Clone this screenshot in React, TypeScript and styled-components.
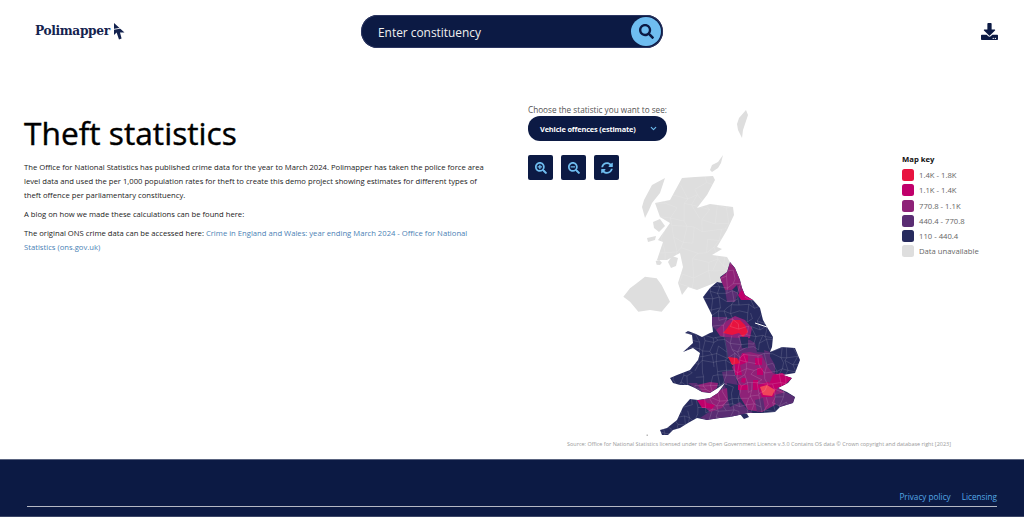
import React, { useMemo } from "react";
import styled, { createGlobalStyle } from "styled-components";
import { FaSearch, FaSearchPlus, FaSearchMinus, FaSyncAlt, FaDownload } from "react-icons/fa";
import { ChevronDown } from "lucide-react";

const NAVY = "#0c1a44";
const SKY = "#6fbdf0";
const FONT = `"Open Sans", "Noto Sans", sans-serif`;

const Global = createGlobalStyle`
  html, body { margin: 0; padding: 0; background: #fff; }
  body { font-family: ${FONT}; height: 528px; overflow: hidden; }
  * { box-sizing: border-box; }
`;
const Page = styled.div`
  display: flex;
  flex-direction: column;
  width: 1024px;
  height: 528px;
`;
const Header = styled.header`
  display: flex;
  align-items: flex-start;
  height: 62px;
  padding: 15px 26px 0 35px;
`;
const Logo = styled.div`
  display: flex;
  align-items: center;
  width: 326.5px;
  height: 32px;
  gap: 3px;
`;
const LogoText = styled.span`
  font-family: "DejaVu Serif", serif;
  font-weight: 700;
  font-size: 12.2px;
  letter-spacing: -0.35px;
  color: #14234f;
`;
const SearchBar = styled.div`
  display: flex;
  align-items: center;
  justify-content: space-between;
  width: 302px;
  height: 33px;
  margin-left: -0.5px;
  padding: 0 2px 0 17px;
  border-radius: 17px;
  background: ${NAVY};
  box-shadow: inset 0 0 0 1px #2b3560;
  color: #f0f0f0;
  font-size: 11.9px;
`;
const SearchButton = styled.span`
  display: flex;
  align-items: center;
  justify-content: center;
  width: 30px;
  height: 29px;
  border-radius: 50%;
  background: ${SKY};
  color: ${NAVY};
  font-size: 15px;
`;
const DownloadSlot = styled.div`
  margin-left: auto;
  padding-top: 8px;
  color: ${NAVY};
  font-size: 17px;
  line-height: 0;
`;
const Main = styled.main`
  display: flex;
  height: 397px;
`;
const Intro = styled.section`
  width: 528px;
  padding: 51px 40px 0 24px;
`;
const Title = styled.h1`
  margin: 0 0 7px;
  font-size: 31.7px;
  line-height: 40px;
  font-weight: 400;
  color: #000;
  -webkit-text-stroke: 0.4px #000;
`;
const Para = styled.p`
  margin: 0 0 5px;
  font-size: 7.66px;
  line-height: 14px;
  color: #222;
`;
const Link = styled.a`
  color: #4a7fb5;
  text-decoration: none;
`;
const Panel = styled.section`
  position: relative;
  display: flex;
  flex-direction: column;
  flex: 1;
  padding-top: 42px;
`;
const Top = styled.div`
  position: relative;
  display: flex;
  justify-content: space-between;
  padding-right: 45px;
`;
const Controls = styled.div`
  display: flex;
  flex-direction: column;
`;
const Label = styled.div`
  font-size: 8.2px;
  line-height: 12px;
  color: #555;
`;
const Select = styled.div`
  display: flex;
  align-items: center;
  justify-content: space-between;
  width: 139px;
  height: 25px;
  padding: 0 9px 0 12px;
  border-radius: 12px;
  background: ${NAVY};
  color: #fff;
  font-size: 7.4px;
  font-weight: 700;
  letter-spacing: -0.15px;
`;
const Tools = styled.div`
  display: flex;
  gap: 8px;
  margin-top: 14px;
`;
const Tool = styled.button`
  display: flex;
  align-items: center;
  justify-content: center;
  width: 25px;
  height: 25px;
  padding: 0;
  border: 0;
  border-radius: 2px;
  background: ${NAVY};
  color: ${SKY};
  font-size: 12px;
`;
const Legend = styled.div`
  display: flex;
  flex-direction: column;
  gap: 3.3px;
  margin-top: 51px;
  width: 77px;
`;
const LegendTitle = styled.div`
  margin-bottom: 1.7px;
  font-size: 7.7px;
  line-height: 9px;
  font-weight: 700;
  color: #111;
`;
const LegendRow = styled.div`
  display: flex;
  align-items: center;
  gap: 5px;
  height: 12px;
  font-size: 7.7px;
  color: #666;
  white-space: nowrap;
`;
const Swatch = styled.span<{ $c: string }>`
  flex: none;
  width: 12px;
  height: 12px;
  border-radius: 2.5px;
  background: ${(p) => p.$c};
`;
const MapSvg = styled.svg`
  position: absolute;
  left: 82px;
  top: 43px;
  width: 200px;
  height: 335px;
  filter: blur(0.35px);
`;
const Source = styled.div`
  position: relative;
  margin: auto 0 11px 39px;
  font-size: 5.48px;
  line-height: 8px;
  color: #999;
  white-space: nowrap;
`;
const Footer = styled.footer`
  display: flex;
  flex-direction: column;
  justify-content: flex-end;
  height: 58px;
  padding: 0 27px 9px;
  background: ${NAVY};
  border-top: 1px solid #5a6480;
  border-bottom: 1px solid #3b4566;
`;
const FooterLinks = styled.nav`
  display: flex;
  justify-content: flex-end;
  gap: 11px;
  padding-bottom: 3px;
  border-bottom: 1px solid #b5b8c4;
  font-size: 8.2px;
  line-height: 12px;
  color: #55a9e6;
`;

const C = { pink: "#e8133f", mag: "#c0006b", pur: "#8e2278", dark: "#5a2d73", navy: "#272b5e", grey: "#dedede", hot: "#f0455a" };

const SCOT =
  "682,178 695,177 713,176 715,180 707,195 697,208 710,204 733,207 734,215 727,230 717,247 722,249 712,255 727,257 730,262 727,272 720,277 722,283 717,282 697,290 688,287 682,295 678,283 683,267 680,253 667,260 657,260 663,242 650,237 658,240 670,223 660,217 655,203 670,200";
const SHET = "746,110 748,115 745,124 743,130 742,138 738,130 737,124 739,118";
const ORK = "710,170 712,165 718,162 723,155 721,163 718,168 712,172";
const HEB = "665,178 652,185 644,200 642,207 645,218 649,210 652,203 660,193";
const SKYE = "653,222 660,219 665,226 659,232 654,228";
const ISLE = "647,238 656,236 655,240 648,242";
const ARRAN = "668,262 672,256 678,258 676,266 671,268";
const NI = "10,110 30,85 50,70 75,50 110,55 125,75 135,95 150,125 125,155 90,150 55,155 30,125";
const ISLAY = "107,3 118,0 126,8 120,15 110,14";
const EW =
  "730,262 735,268 740,280 742,288 745,295 753,300 760,308 763,320 767,327 773,337 772,347 770,352 782,347 795,348 800,360 795,373 783,375 792,378 788,383 778,388 787,392 795,397 793,403 780,407 775,412 762,413 748,413 730,417 720,418 707,420 697,418 688,423 680,428 673,430 668,435 662,435 660,430 667,428 677,420 683,407 690,399 698,400 710,398 718,393 725,383 718,388 710,393 702,392 695,388 688,385 680,385 673,383 670,378 677,375 690,370 698,360 700,353 693,348 683,352 693,343 692,335 685,333 688,331 696,334 702,337 710,333 713,332 712,323 712,315 707,305 703,297 710,288 717,282 722,283 720,277 727,272";

const REGIONS: [string, string][] = [
  [C.pur, "730,262 735,268 740,280 742,287 737,285 732,290 725,290 720,278 727,272"],
  [C.dark, "725,290 732,290 738,293 735,302 727,302"],
  [C.pur, "737,285 742,287 745,293 739,294"],
  [C.mag, "742,290 745,295 753,300 741,300 738,295"],
  [C.dark, "712,317 727,317 728,327 716,330 712,326"],
  [C.pur, "716,330 728,320 735,316 745,320 752,328 750,338 740,340 720,336"],
  [C.pink, "733,320 740,320 745,325 748,332 743,337 739,333 732,335 723,333 728,327"],
  [C.dark, "725,337 740,338 750,340 755,343 757,352 768,353 775,365 775,373 760,370 740,365 738,360 728,357"],
  [C.navy, "740,337 748,337 748,348 742,348"],
  [C.pur, "742,353 750,352 762,355 768,367 773,373 780,375 778,388 785,392 775,405 762,412 748,410 740,397 738,382 732,367 738,360"],
  [C.dark, "722,372 733,370 738,385 725,385"],
  [C.navy, "727,383 738,385 740,402 730,407 727,397"],
  [C.dark, "725,385 727,397 730,407 740,402 748,410 755,414 720,418 707,420 700,418 712,410 712,400"],
  [C.pur, "697,385 710,382 718,383 717,388 710,393 702,392"],
  [C.dark, "688,383 697,383 702,392 695,388"],
  [C.pur, "715,392 727,388 728,400 722,408 710,412 697,400 710,398"],
  [C.mag, "697,400 705,400 710,408 702,408"],
  [C.mag, "707,403 715,405 712,409 705,407"],
  [C.dark, "775,395 785,392 795,397 793,403 780,407 775,403"],
  [C.dark, "755,400 763,398 765,410 757,412"],
  [C.mag, "735,365 740,358 743,353 748,355 748,362 740,365 742,375 735,375"],
  [C.pink, "728,357 737,358 740,363 732,365"],
  [C.mag, "755,358 762,358 762,365 755,365"],
  [C.mag, "757,368 763,368 763,375 757,375"],
  [C.mag, "770,382 773,375 782,373 792,378 785,385 778,388 770,383"],
  [C.mag, "738,385 748,385 748,390 738,390"],
  [C.mag, "742,378 746,378 745,383 741,382"],
  [C.mag, "753,380 758,380 758,390 753,390"],
  [C.mag, "757,385 768,382 778,387 773,397 762,397"],
  [C.hot, "760,387 767,385 775,390 772,396 763,395"],
  [C.dark, "764,350 770,352 770,365 766,362"],
  [C.pink, "728,327 732,322 735,326 731,330"],
];

function useMesh(x0: number, y0: number, x1: number, y1: number, step: number, seed: number) {
  return useMemo(() => {
    let s = seed;
    const rnd = () => {
      s = (s * 16807) % 2147483647;
      return s / 2147483647 - 0.5;
    };
    const pts: [number, number][][] = [];
    for (let y = y0; y <= y1; y += step) {
      const row: [number, number][] = [];
      for (let x = x0; x <= x1; x += step) row.push([x + rnd() * step * 0.9, y + rnd() * step * 0.9]);
      pts.push(row);
    }
    let d = "";
    pts.forEach((row, j) =>
      row.forEach((p, i) => {
        if (rnd() > -0.25 && i + 1 < row.length) d += `M${p[0]} ${p[1]}L${row[i + 1][0]} ${row[i + 1][1]}`;
        if (rnd() > -0.25 && j + 1 < pts.length) d += `M${p[0]} ${p[1]}L${pts[j + 1][i][0]} ${pts[j + 1][i][1]}`;
      })
    );
    return d;
  }, [x0, y0, x1, y1, step, seed]);
}

const UkMap = () => {
  const south = useMesh(655, 258, 805, 440, 7, 4711);
  const north = useMesh(640, 175, 740, 295, 11, 909);
  return (
    <MapSvg viewBox="610 105 200 335">
      <defs>
        <clipPath id="ew"><polygon points={EW} /></clipPath>
        <clipPath id="sc"><polygon points={SCOT} /></clipPath>
      </defs>
      <g fill={C.grey}>
        <polygon points={SHET} />
        <polygon points={ORK} />
        <polygon points={HEB} />
        <polygon points={SKYE} />
        <polygon points={ISLE} />
        <polygon points={ARRAN} />
        <polygon points={SCOT} />
      </g>
      <path clipPath="url(#sc)" d={north} fill="none" stroke="#fff" strokeOpacity={0.35} strokeWidth={0.35} />
      <g transform="translate(620 260) scale(0.3333)">
        <polygon points={NI} fill={C.grey} />
        <polygon points={ISLAY} fill={C.grey} />
      </g>
      <rect x="646.5" y="434.5" width="1.5" height="1.5" fill="#bbb" />
      <polygon points="740,414 747,414 749,417 744,419" fill={C.navy} />
      <g clipPath="url(#ew)">
        <rect x="650" y="255" width="160" height="185" fill={C.navy} />
        {REGIONS.map(([c, p], i) => (
          <polygon key={i} points={p} fill={c} />
        ))}
        <path d={south} fill="none" stroke="#fff" strokeOpacity={0.3} strokeWidth={0.45} />
      </g>
      <path d="M755 323 L767 327" stroke="#fff" strokeWidth="1" />
    </MapSvg>
  );
};

const LEGEND: [string, string][] = [
  [C.pink, "1.4K - 1.8K"],
  [C.mag, "1.1K - 1.4K"],
  [C.pur, "770.8 - 1.1K"],
  [C.dark, "440.4 - 770.8"],
  [C.navy, "110 - 440.4"],
  [C.grey, "Data unavailable"],
];

export default function App() {
  return (
    <Page>
      <Global />
      <Header>
        <Logo>
          <LogoText>Polimapper</LogoText>
          <svg width="12" height="17" viewBox="0 0 12 17">
            <path d="M1 0 L1 12 L3.6 9.6 L6 16.5 L8.6 15.5 L7 9.6 L11.5 9.6 Z" fill="#14234f" />
            <path d="M0 6.5 L8 5" stroke="#fff" strokeWidth="0.9" />
          </svg>
        </Logo>
        <SearchBar>
          Enter constituency
          <SearchButton><FaSearch /></SearchButton>
        </SearchBar>
        <DownloadSlot><FaDownload /></DownloadSlot>
      </Header>
      <Main>
        <Intro>
          <Title>Theft statistics</Title>
          <Para>
            The Office for National Statistics has published crime data for the year to March 2024. Polimapper has taken the police force area level data and used the per 1,000 population rates for theft to create this demo project showing estimates for different types of theft offence per parliamentary constituency.
          </Para>
          <Para>A blog on how we made these calculations can be found here:</Para>
          <Para>
            The original ONS crime data can be accessed here: <Link>Crime in England and Wales: year ending March 2024 - Office for National Statistics (ons.gov.uk)</Link>
          </Para>
        </Intro>
        <Panel>
          <UkMap />
          <Top>
            <Controls>
              <Label>Choose the statistic you want to see:</Label>
              <Select>
                Vehicle offences (estimate)
                <ChevronDown size={9} strokeWidth={3} color={SKY} />
              </Select>
              <Tools>
                <Tool><FaSearchPlus /></Tool>
                <Tool><FaSearchMinus /></Tool>
                <Tool><FaSyncAlt /></Tool>
              </Tools>
            </Controls>
            <Legend>
              <LegendTitle>Map key</LegendTitle>
              {LEGEND.map(([c, t]) => (
                <LegendRow key={t}><Swatch $c={c} />{t}</LegendRow>
              ))}
            </Legend>
          </Top>
          <Source>
            Source: Office for National Statistics licensed under the Open Government Licence v.3.0 Contains OS data © Crown copyright and database right [2023]
          </Source>
        </Panel>
      </Main>
      <Footer>
        <FooterLinks>
          <span>Privacy policy</span>
          <span>Licensing</span>
        </FooterLinks>
      </Footer>
    </Page>
  );
}
